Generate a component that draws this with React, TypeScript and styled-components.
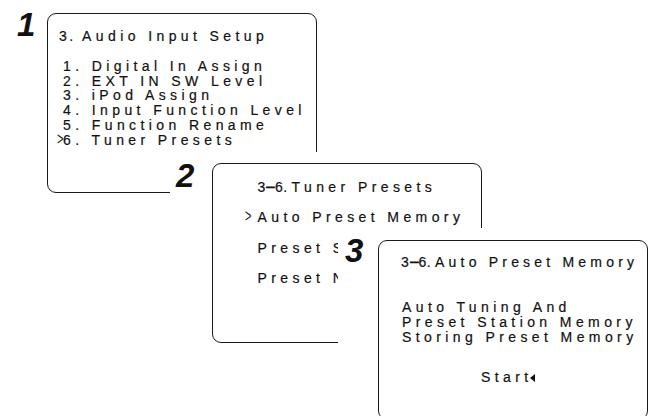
import React from 'react';
import styled, { createGlobalStyle } from 'styled-components';

const GlobalStyle = createGlobalStyle`
  html, body {
    margin: 0;
    padding: 0;
    background: #fff;
  }
  body {
    font-family: "Liberation Sans", Arial, sans-serif;
    color: #111;
  }
`;

const App: React.FC = () => (
  <>
    <GlobalStyle />
    <Canvas>
      <Step $x={10} $y={5}>
        <StepNumber $width={37} $padLeft={7} $top={2.7}>1</StepNumber>
        <Screen $top={8} $pad="15.3px 0 0 9px">
          <Heading $indent={2}><Num $spacing={2.5}>3. </Num>Audio Input Setup</Heading>
          <List>
            <MenuRow $marker={6}><Marker />1. Digital In Assign</MenuRow>
            <MenuRow $marker={6}><Marker />2. EXT IN SW Level</MenuRow>
            <MenuRow $marker={6}><Marker />3. iPod Assign</MenuRow>
            <MenuRow $marker={6}><Marker />4. Input Function Level</MenuRow>
            <MenuRow $marker={6}><Marker />5. Function Rename</MenuRow>
            <MenuRow $marker={6}><Marker><Caret>&gt;</Caret></Marker>6. Tuner Presets</MenuRow>
          </List>
        </Screen>
      </Step>

      <Step $x={170} $y={152}>
        <StepNumber $width={42} $padLeft={6} $top={6.7}>2</StepNumber>
        <Screen $top={11} $pad="16.3px 0 0 31.5px">
          <Heading $indent={13}><Num $spacing={0.3}>3<Dash>−</Dash>6. </Num>Tuner Presets</Heading>
          <SpacedList>
            <MenuRow $marker={13}><Marker><Caret>&gt;</Caret></Marker>Auto Preset Memory</MenuRow>
            <MenuRow $marker={13}><Marker />Preset Skip</MenuRow>
            <MenuRow $marker={13}><Marker />Preset Name</MenuRow>
          </SpacedList>
        </Screen>
      </Step>

      <Step $x={338} $y={228}>
        <StepNumber $width={40} $padLeft={7} $top={5.7}>3</StepNumber>
        <Screen $top={12} $pad="14.3px 0 0 22px">
          <Heading $indent={0}><Num $spacing={0.3}>3<Dash>−</Dash>6. </Num><Tight>Auto Preset Memory</Tight></Heading>
          <Message>
            <div>Auto Tuning And</div>
            <div>Preset Station Memory</div>
            <div>Storing Preset Memory</div>
          </Message>
          <StartLine>
            Start<Cursor />
          </StartLine>
        </Screen>
      </Step>
    </Canvas>
  </>
);

const Canvas = styled.div`
  position: relative;
  width: 653px;
  height: 416px;
  overflow: hidden;
  background: #fff;
`;

// each step (number + screen) is laid over the previous one like a card
const Step = styled.div<{ $x: number; $y: number }>`
  position: absolute;
  left: ${({ $x }) => $x}px;
  top: ${({ $y }) => $y}px;
  display: flex;
  align-items: flex-start;
  background: #fff;
`;

const StepNumber = styled.div<{ $width: number; $padLeft: number; $top: number }>`
  box-sizing: border-box;
  width: ${({ $width }) => $width}px;
  padding-left: ${({ $padLeft }) => $padLeft}px;
  margin-top: ${({ $top }) => $top}px;
  font-family: "Liberation Sans", Arial, sans-serif;
  font-size: 33px;
  font-weight: 700;
  font-style: italic;
  line-height: 1;
  color: #111;
`;

const Screen = styled.div<{ $top: number; $pad: string }>`
  box-sizing: border-box;
  width: 270px;
  height: 180px;
  margin-top: ${({ $top }) => $top}px;
  padding: ${({ $pad }) => $pad};
  border: 1.5px solid #1a1a1a;
  border-radius: 9px;
  font-family: "Liberation Sans", Arial, sans-serif;
  font-size: 14px;
  line-height: 14.8px;
  letter-spacing: 4.4px;
  color: #111;
  -webkit-text-stroke: 0.2px #111;
  white-space: nowrap;
  overflow: hidden;
`;

const Heading = styled.div<{ $indent: number }>`
  margin-left: ${({ $indent }) => $indent}px;
`;

const Num = styled.span<{ $spacing: number }>`
  letter-spacing: ${({ $spacing }) => $spacing}px;
`;

const Tight = styled.span`
  letter-spacing: 4.2px;
`;

const Dash = styled.span`
  display: inline-block;
  font-weight: 700;
  transform: scaleX(1.25);
  margin: 0 0.5px;
`;

const List = styled.div`
  margin-top: 14.8px;
  display: flex;
  flex-direction: column;
`;

const SpacedList = styled.div`
  margin-top: 15px;
  display: flex;
  flex-direction: column;
  gap: 15px;
`;

const MenuRow = styled.div<{ $marker: number }>`
  display: flex;
  align-items: baseline;

  & > span:first-child {
    width: ${({ $marker }) => $marker}px;
  }
`;

const Marker = styled.span`
  flex: none;
  letter-spacing: 0;
`;

const Caret = styled.span`
  display: inline-block;
  font-size: 13px;
  -webkit-text-stroke: 0;
  transform: translateY(-1px) scale(0.85, 1.35);
  transform-origin: left center;
`;

const Message = styled.div`
  margin-top: 30.2px;
  margin-left: 1px;
`;

const StartLine = styled.div`
  margin-top: 25.6px;
  margin-left: 80px;
  display: flex;
  align-items: center;
`;

const Cursor = styled.span`
  display: inline-block;
  width: 0;
  height: 0;
  margin-left: -2.5px;
  border-top: 4px solid transparent;
  border-bottom: 4px solid transparent;
  border-right: 5px solid #111;
`;

export default App;
